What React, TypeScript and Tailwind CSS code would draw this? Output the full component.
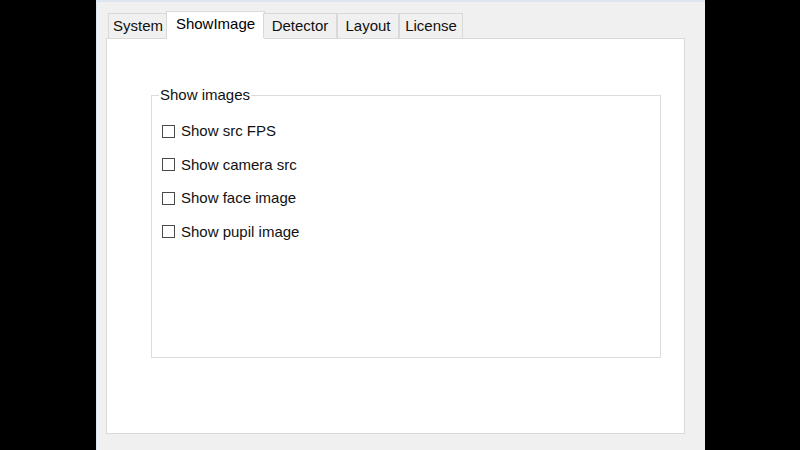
import React from "react";

const tabs = [
  { label: "System", w: 60 },
  { label: "ShowImage", w: 95, active: true },
  { label: "Detector", w: 74 },
  { label: "Layout", w: 62 },
  { label: "License", w: 64 },
];

const items = ["Show src FPS", "Show camera src", "Show face image", "Show pupil image"];

export default function App() {
  return (
    <div
      className="w-[800px] h-[450px] bg-black flex overflow-hidden"
      style={{ fontFamily: '"Liberation Sans", Arial, sans-serif' }}
    >
      <div className="ml-[96px] w-[609px] h-[450px] bg-[#f0f0f0] border-l border-t-2 border-[#dde6ee] flex flex-col">
        {/* tabs */}
        <div className="flex items-end h-[36px] pl-[11px] relative z-10">
          {tabs.map((t) =>
            t.active ? (
              <div
                key={t.label}
                className="h-[28px] -mx-[2px] -mb-[1px] bg-white border border-b-0 border-[#d9d9d9] flex items-center justify-center text-[15px] text-black pb-[2px]"
                style={{ width: t.w + 4 }}
              >
                {t.label}
              </div>
            ) : (
              <div
                key={t.label}
                className="h-[25px] bg-[#f0f0f0] border border-b-0 border-[#d9d9d9] flex items-center justify-center text-[15px] text-[#111]"
                style={{ width: t.w }}
              >
                {t.label}
              </div>
            )
          )}
        </div>
        {/* panel */}
        <div className="ml-[9px] w-[579px] h-[396px] bg-white border border-[#d9d9d9] pt-[47px] pl-[44px]">
          <fieldset className="w-[510px] h-[272px] border border-[#dcdcdc]">
            <legend className="ml-[7px] px-[1px] text-[15px] leading-[18px] text-[#111]">Show images</legend>
            <div className="flex flex-col pl-[10px] pt-[10.5px]">
              {items.map((it) => (
                <div key={it} className="h-[33.5px] flex items-center">
                  <div className="w-[13px] h-[13px] border border-[#4a4a4a] bg-white" />
                  <span className="ml-[6px] text-[15px] text-[#111]">{it}</span>
                </div>
              ))}
            </div>
          </fieldset>
        </div>
      </div>
    </div>
  );
}
